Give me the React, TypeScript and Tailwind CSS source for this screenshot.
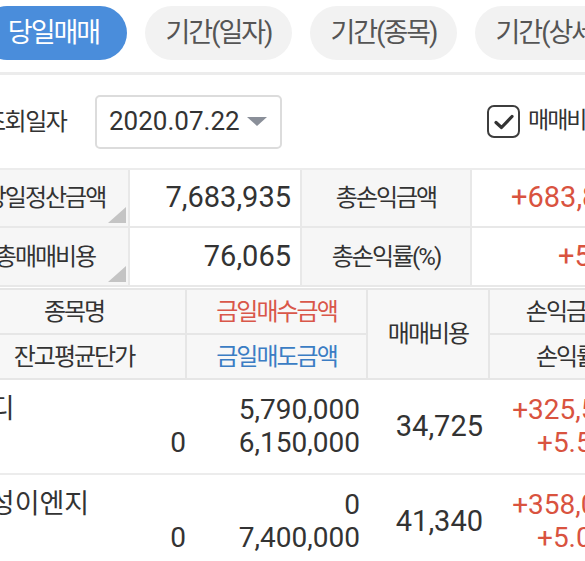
import React from 'react'

const tabs = ['당일매매', '기간(일자)', '기간(종목)', '기간(상세)']

const rows = [
  { name: '코디', avg: '0', buy: '5,790,000', sell: '6,150,000', fee: '34,725', pl: '+325,512', rate: '+5.59%' },
  { name: '우성이엔지', avg: '0', buy: '0', sell: '7,400,000', fee: '41,340', pl: '+358,037', rate: '+5.08%' },
]

function Corner() {
  return (
    <svg className="absolute right-[2px] bottom-[3px]" width="18" height="16" viewBox="0 0 18 16">
      <polygon points="18,0 18,16 0,16" fill="#c4c4c4" />
    </svg>
  )
}

export default function App() {
  return (
    <div className="w-[585px] h-[561px] overflow-hidden bg-white text-[#333] font-[Roboto,'Noto_Sans_CJK_KR',sans-serif]">
      {/* 상단 탭 */}
      <div className="flex gap-[18px] -ml-[20px] pt-[6px] pb-[12px] border-b-[3px] border-[#ececec]">
        {tabs.map((t, i) => (
          <div
            key={t}
            className={`shrink-0 w-[147px] h-[54px] rounded-full flex items-center justify-center text-[27px] tracking-[-2px] whitespace-nowrap ${
              i === 0 ? 'bg-[#4a8ddb] text-white' : 'bg-[#f2f2f2] text-[#555]'
            }`}
          >
            {t}
          </div>
        ))}
      </div>

      {/* 조회일자 */}
      <div className="flex items-center h-[93px]">
        <div className="shrink-0 w-[111px] -ml-[16px] text-[24px] tracking-[-1.5px] text-[#333] whitespace-nowrap">조회일자</div>
        <div className="shrink-0 w-[187px] h-[54px] border-2 border-[#dcdcdc] rounded-[5px] flex items-center justify-between pl-[12px] pr-[13px]">
          <span className="text-[26px] text-[#333]">2020.07.22</span>
          <svg width="20" height="10" viewBox="0 0 20 10">
            <polygon points="0,0 20,0 10,9" fill="#8a8f99" />
          </svg>
        </div>
        <div className="shrink-0 ml-[205px] w-[33px] h-[33px] rounded-[7px] border-[2.5px] border-[#3d3d3d] flex items-center justify-center">
          <svg width="20" height="16" viewBox="0 0 20 16">
            <path d="M2 8.5 L7.5 13.5 L18 2.5" fill="none" stroke="#333" strokeWidth="3.2" strokeLinecap="round" strokeLinejoin="round" />
          </svg>
        </div>
        <div className="shrink-0 ml-[8px] text-[23px] tracking-[-2px] whitespace-nowrap text-[#333]">매매비용포함</div>
      </div>

      {/* 합계 */}
      <div className="grid grid-cols-[160px_172px_170px_170px] w-max -ml-[30px] border-t-2 border-[#ececec]">
        <div className="relative h-[58px] bg-[#f6f6f6] border-r-2 border-b-2 border-[#e8e8e8] flex items-center justify-center pr-[8px] text-[24px] tracking-[-2px] whitespace-nowrap">
          당일정산금액
          <Corner />
        </div>
        <div className="h-[58px] border-r-2 border-b-2 border-[#e8e8e8] flex items-center justify-end pr-[9px] text-[29px]">7,683,935</div>
        <div className="h-[58px] bg-[#f6f6f6] border-r-2 border-b-2 border-[#e8e8e8] flex items-center justify-center text-[24px] tracking-[-2px]">총손익금액</div>
        <div className="h-[58px] border-b-2 border-[#e8e8e8] flex items-center justify-end pr-[11px] text-[29px] text-[#d9533f]">+683,870</div>

        <div className="relative h-[59px] bg-[#f6f6f6] border-r-2 border-b-2 border-[#e8e8e8] flex items-center justify-center pr-[8px] text-[24px] tracking-[-2px] whitespace-nowrap">
          총매매비용
          <Corner />
        </div>
        <div className="h-[59px] border-r-2 border-b-2 border-[#e8e8e8] flex items-center justify-end pr-[9px] text-[29px]">76,065</div>
        <div className="h-[59px] bg-[#f6f6f6] border-r-2 border-b-2 border-[#e8e8e8] flex items-center justify-center text-[24px] tracking-[-2px]">총손익률(%)</div>
        <div className="h-[59px] border-b-2 border-[#e8e8e8] flex items-center justify-end pr-[11px] text-[29px] text-[#d9533f]">+5.58</div>
      </div>

      {/* 헤더 */}
      <div className="mt-[1px] grid grid-cols-[224px_181px_122px_152px] grid-rows-[45px_45px] w-max -ml-[37px] border-t-2 border-[#e6e6e6] bg-[#f7f7f7] text-[24px] tracking-[-2px]">
        <div className="border-r-2 border-b-2 border-[#e6e6e6] flex items-center justify-center">종목명</div>
        <div className="border-r-2 border-b-2 border-[#e6e6e6] flex items-center justify-center text-[#d9574a]">금일매수금액</div>
        <div className="row-span-2 border-r-2 border-b-2 border-[#e6e6e6] flex items-center justify-center">매매비용</div>
        <div className="border-b-2 border-[#e6e6e6] flex items-center justify-center">손익금액</div>
        <div className="border-r-2 border-b-2 border-[#e6e6e6] flex items-center justify-center">잔고평균단가</div>
        <div className="border-r-2 border-b-2 border-[#e6e6e6] flex items-center justify-center text-[#3b7dc4]">금일매도금액</div>
        <div className="border-b-2 border-[#e6e6e6] flex items-center justify-center">손익률</div>
      </div>

      {/* 종목 목록 */}
      {rows.map((r) => (
        <div
          key={r.name}
          className="grid grid-cols-[224px_181px_122px_152px] w-max -ml-[37px] h-[95px] border-b-2 border-[#ececec] text-[28px] leading-[33px]"
        >
          <div className="pt-[13px] flex flex-col">
            <div className="ml-[2px] text-[27px] tracking-[0px] whitespace-nowrap">{r.name}</div>
            <div className="text-right pr-[1px]">{r.avg}</div>
          </div>
          <div className="pt-[13px] flex flex-col items-end pr-[8px]">
            <div>{r.buy}</div>
            <div>{r.sell}</div>
          </div>
          <div className="flex items-center justify-end pr-[7px] text-[29px]">{r.fee}</div>
          <div className="pt-[13px] flex flex-col items-end pr-[14px] text-[#d9533f]">
            <div>{r.pl}</div>
            <div>{r.rate}</div>
          </div>
        </div>
      ))}
    </div>
  )
}
